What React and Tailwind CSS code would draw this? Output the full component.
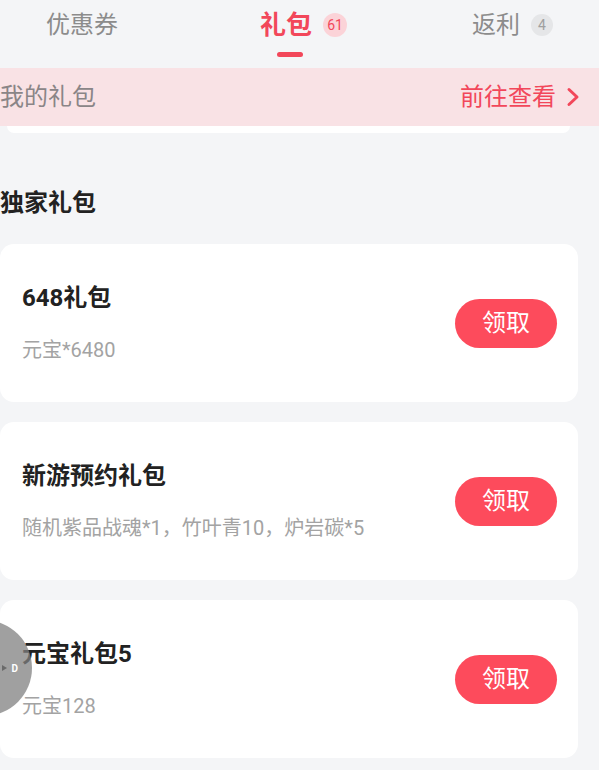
import React from 'react';

const gifts = [
  { title: '648礼包', desc: '元宝*6480' },
  { title: '新游预约礼包', desc: '随机紫品战魂*1，竹叶青10，炉岩碳*5' },
  { title: '元宝礼包5', desc: '元宝128' },
];

const GiftCard = ({ title, desc }) => (
  <div className="flex h-[158px] items-center justify-between rounded-[14px] bg-white pl-[22px] pr-[21px]">
    <div className="flex flex-col gap-[24px]">
      <div className="text-[24px] font-bold leading-[30px] text-[#222222]">{title}</div>
      <div className="text-[20px] leading-[26px] text-[#a3a3a3]">{desc}</div>
    </div>
    <button className="flex h-[49px] w-[102px] items-center justify-center rounded-full bg-[#fd4b5c] text-[24px] text-white">
      领取
    </button>
  </div>
);

export default function App() {
  return (
    <div
      className="relative h-[770px] w-[599px] overflow-hidden bg-[#f4f5f7]"
      style={{ fontFamily: 'Roboto, "Noto Sans CJK SC", sans-serif' }}
    >
      {/* tabs */}
      <div className="relative flex h-[68px] items-start pt-[7px]">
        <div className="ml-[46px] text-[24px] leading-[36px] text-[#8c8c8c]">优惠券</div>
        <div className="relative ml-[142px] flex items-center">
          <span className="text-[26px] font-bold leading-[36px] text-[#f2475a]">礼包</span>
          <span className="ml-[11px] flex h-[24px] w-[24px] items-center justify-center rounded-full bg-[#fbd3d8] text-[14px] text-[#f2475a]">
            61
          </span>
          <span className="absolute left-[17px] top-[45px] h-[5px] w-[26px] rounded-full bg-[#f2475a]" />
        </div>
        <div className="ml-[125px] flex items-center">
          <span className="text-[24px] leading-[36px] text-[#8c8c8c]">返利</span>
          <span className="ml-[11px] flex h-[22px] w-[22px] items-center justify-center rounded-full bg-[#e5e6e8] text-[14px] text-[#a0a0a0]">
            4
          </span>
        </div>
      </div>

      {/* my gifts banner */}
      <div className="flex h-[58px] items-center justify-between bg-[#f9e2e5] pr-[19px]">
        <span className="text-[24px] text-[#8a8587]">我的礼包</span>
        <span className="flex items-center text-[24px] text-[#f2475a]">
          前往查看
          <svg width="14" height="22" viewBox="0 0 14 22" className="ml-[10px]">
            <path d="M3 3.5 L11 11 L3 18.5" fill="none" stroke="#f2475a" strokeWidth="3" strokeLinecap="round" strokeLinejoin="round" />
          </svg>
        </span>
      </div>
      <div className="ml-[7px] h-[7px] w-[563px] rounded-b-[10px] bg-white" />

      {/* exclusive gifts */}
      <div className="pt-[55px] text-[24px] font-bold leading-[30px] text-[#222222]">独家礼包</div>

      <div className="mt-[26px] flex w-[578px] flex-col gap-[20px]">
        {gifts.map((g) => (
          <GiftCard key={g.title} title={g.title} desc={g.desc} />
        ))}
      </div>

      {/* floating assistive ball */}
      <div className="absolute left-[-64px] top-[620px] flex h-[96px] w-[96px] items-center justify-end rounded-full bg-[#808080]/75 pr-[14px]">
        <span className="mr-[5px] h-0 w-0 border-y-[3px] border-l-[5px] border-y-transparent border-l-[#6a6a6a]" />
        <span className="text-[10px] font-bold text-white">D</span>
      </div>
    </div>
  );
}
